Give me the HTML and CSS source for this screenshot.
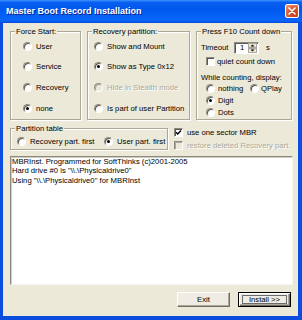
FILE: index.html
```html
<!DOCTYPE html>
<html lang="en">
<head>
  <meta charset="UTF-8" />
  <title>Master Boot Record Installation</title>
  <link rel="stylesheet" href="styles.css">
</head>
<body>
  <div class="window">
    <div class="titlebar">
      <span class="title">Master Boot Record Installation</span>
      <span class="close">
        <svg width="8" height="8" viewBox="0 0 8 8"><path d="M1 1L7 7M7 1L1 7" stroke="#fff" stroke-width="1.6" stroke-linecap="round"/></svg>
      </span>
    </div>

    <div class="client">
      <div class="top-row">
        <!-- Force Start -->
        <fieldset class="group">
          <legend>Force Start:</legend>
          <div class="opts force">
            <div class="opt"><span class="radio"></span>User</div>
            <div class="opt"><span class="radio"></span>Service</div>
            <div class="opt"><span class="radio"></span>Recovery</div>
            <div class="opt"><span class="radio on"></span>none</div>
          </div>
        </fieldset>

        <!-- Recovery partition -->
        <fieldset class="group">
          <legend>Recovery partition:</legend>
          <div class="opts recovery">
            <div class="opt"><span class="radio"></span>Show and Mount</div>
            <div class="opt"><span class="radio on"></span>Show as Type 0x12</div>
            <div class="opt disabled"><span class="radio"></span>Hide in Stealth mode</div>
            <div class="opt"><span class="radio"></span>Is part of user Partition</div>
          </div>
        </fieldset>

        <!-- Press F10 -->
        <fieldset class="group">
          <legend>Press F10 Count down</legend>
          <div class="f10">
            <div class="timeout-row">
              <span class="timeout-label">Timeout</span>
              <span class="spin">
                <span class="spin-value">1</span>
                <svg class="spin-arrows" width="9" height="10" viewBox="0 0 9 10">
                  <rect x="0.5" y="0.5" width="8" height="4" fill="#ece9d8" stroke="#aca899"/>
                  <rect x="0.5" y="5.5" width="8" height="4" fill="#ece9d8" stroke="#aca899"/>
                  <path d="M2.5 3.5L4.5 1.5L6.5 3.5Z" fill="#000"/>
                  <path d="M2.5 6.5L4.5 8.5L6.5 6.5Z" fill="#000"/>
                </svg>
              </span>
              <span class="unit">s</span>
            </div>
            <div class="opt check-row"><span class="check"></span>quiet count down</div>
            <div class="while">While counting, display:</div>
            <div class="opt radio-row">
              <span class="pair"><span class="radio"></span>nothing</span>
              <span class="pair"><span class="radio"></span>QPlay</span>
            </div>
            <div class="opt radio-row"><span class="radio on"></span>Digit</div>
            <div class="opt radio-row"><span class="radio"></span>Dots</div>
          </div>
        </fieldset>
      </div>

      <div class="mid-row">
        <fieldset class="group ptable">
          <legend>Partition table</legend>
          <div class="ptable-opts">
            <span class="opt first"><span class="radio"></span>Recovery part. first</span>
            <span class="opt"><span class="radio on"></span>User part. first</span>
          </div>
        </fieldset>
        <div class="checks">
          <div class="opt"><span class="check on">
            <svg width="7" height="7" viewBox="0 0 7 7"><path d="M1 3.2L2.7 5L6 1.5" fill="none" stroke="#000" stroke-width="1.4"/></svg>
          </span>use one sector MBR</div>
          <div class="opt disabled"><span class="check off"></span>restore deleted Recovery part.</div>
        </div>
      </div>

      <div class="log">MBRInst. Programmed for SoftThinks (c)2001-2005
Hard drive #0 is "\\.\Physicaldrive0"
Using "\\.\Physicaldrive0" for MBRInst</div>

      <div class="buttons">
        <button class="btn">Exit</button>
        <button class="btn default"><span class="focus">Install &gt;&gt;</span></button>
      </div>
    </div>
  </div>
</body>
</html>
```

FILE: styles.css
```css
html, body {
  margin: 0;
  padding: 0;
}
body {
  width: 302px;
  height: 320px;
  overflow: hidden;
  font-family: "Liberation Sans", Arial, sans-serif;
  font-size: 7.7px;
  line-height: 9px;
  color: #000;
}
.window {
  width: 302px;
  height: 320px;
  display: flex;
  flex-direction: column;
  background: #0a4ddf;
}

/* Title bar */
.titlebar {
  flex: none;
  height: 22px;
  padding: 0 0 1px 6px;
  display: flex;
  align-items: center;
  background: linear-gradient(to bottom, #3d95ff 0%, #0a5ef0 10%, #0058ee 40%, #0866fb 85%, #0b62f4 92%, #0445d8 100%);
}
.title {
  font-weight: 700;
  font-size: 9px;
  color: #fff;
  text-shadow: 1px 1px 0 #0a1f8f;
}
.close {
  margin-left: auto;
  margin-right: 3px;
  width: 14px;
  height: 14px;
  box-sizing: border-box;
  border: 1px solid #fff;
  border-radius: 2px;
  background: radial-gradient(circle at 70% 75%, #c63a1a 0%, #d85a32 50%, #ea8a64 85%, #f5b49a 100%);
  display: flex;
  align-items: center;
  justify-content: center;
}

/* Client area */
.client {
  flex: 1;
  margin: 0 4px 4px 3px;
  padding: 3.5px 5px 0 7px;
  background: #ece9d8;
  display: flex;
  flex-direction: column;
}

/* Group boxes */
.top-row {
  display: grid;
  grid-template-columns: 71px 103px 96px;
  column-gap: 6px;
  height: 93px;
}
.group {
  margin: 0;
  padding: 0;
  min-width: 0;
  border: 1px solid #aca899;
  box-shadow: 1px 1px 0 #fff, inset 1px 1px 0 #fff;
}
.group legend {
  margin-left: 4px;
  padding: 0 1px;
  line-height: 9px;
  background: #ece9d8;
}

.opts {
  display: flex;
  flex-direction: column;
  gap: 11.7px;
  padding-top: 6px;
}
.opts.force {
  padding-left: 12px;
}
.opts.recovery {
  padding-left: 6px;
}
.opt {
  display: flex;
  align-items: center;
  gap: 4px;
  height: 9px;
  white-space: nowrap;
}
.opt.disabled {
  color: #aca899;
  text-shadow: 1px 1px 0 #fff;
}

/* Radio and check boxes */
.radio {
  flex: none;
  position: relative;
  width: 9px;
  height: 9px;
  box-sizing: border-box;
  border-radius: 50%;
  background: #fff;
  border: 1px solid;
  border-color: #8d8b80 #fff #fff #8d8b80;
  box-shadow: inset 1px 1px 0 #5a5850;
}
.radio.on::after {
  content: '';
  position: absolute;
  left: 2px;
  top: 2px;
  width: 3px;
  height: 3px;
  border-radius: 50%;
  background: #000;
}
.disabled .radio {
  background: #ece9d8;
  box-shadow: inset 1px 1px 0 #aca899;
}
.check {
  flex: none;
  width: 9px;
  height: 9px;
  box-sizing: border-box;
  background: #fff;
  border: 1px solid;
  border-color: #8d8b80 #fff #fff #8d8b80;
  box-shadow: inset 1px 1px 0 #5a5850;
  display: flex;
  align-items: center;
  justify-content: center;
}
.check.off {
  background: #ece9d8;
  box-shadow: inset 1px 1px 0 #aca899;
}

/* Press F10 group */
.f10 {
  padding: 6px 0 0 4px;
}
.timeout-row {
  display: flex;
  align-items: center;
  height: 12px;
}
.timeout-label {
  width: 33px;
}
.spin {
  width: 25px;
  height: 12px;
  box-sizing: border-box;
  background: #fff;
  border: 1px solid;
  border-color: #8d8b80 #fff #fff #8d8b80;
  box-shadow: inset 1px 1px 0 #5a5850;
  display: flex;
  align-items: center;
  padding-left: 5px;
}
.spin-value {
  flex: 1;
}
.spin-arrows {
  margin-right: 1px;
}
.unit {
  margin-left: 7px;
}
.check-row {
  margin: 3.3px 0 0 5px;
  gap: 2px;
}
.while {
  margin-top: 7px;
  height: 9px;
}
.radio-row {
  margin: 2.6px 0 0 5px;
  gap: 3px;
}
.pair {
  display: flex;
  align-items: center;
  gap: 3px;
  width: 48px;
}
.pair:last-child {
  gap: 2px;
}

/* Partition table row */
.mid-row {
  display: flex;
  margin-top: 4.3px;
}
.ptable {
  width: 158px;
  box-sizing: border-box;
}
.ptable-opts {
  display: flex;
  padding: 4.4px 0 3px 6px;
}
.ptable-opts .first {
  width: 87px;
}
.checks {
  margin-left: 6px;
  padding-top: 4.2px;
  display: flex;
  flex-direction: column;
  gap: 4px;
}

/* Output log */
.log {
  margin-top: 5.8px;
  height: 129px;
  box-sizing: border-box;
  padding: 0 0 0 1px;
  background: #fff;
  border: 1px solid;
  border-color: #8d8b80 #f5f4ee #f5f4ee #8d8b80;
  box-shadow: inset 1px 1px 0 #cfcbbd;
  white-space: pre;
  line-height: 9.5px;
}

/* Buttons */
.buttons {
  display: flex;
  justify-content: flex-end;
  gap: 8px;
  margin-top: 7px;
  padding-right: 2px;
}
.btn {
  width: 53px;
  height: 15px;
  padding: 0;
  box-sizing: border-box;
  font: inherit;
  color: #000;
  background: #efede3;
  border: 1px solid;
  border-color: #fff #716f64 #716f64 #fff;
  box-shadow: inset -1px -1px 0 #aca899;
  display: flex;
  align-items: center;
  justify-content: center;
}
.btn.default {
  border: 1px solid #000;
  box-shadow: inset 1px 1px 0 #fff, inset -1px -1px 0 #716f64, inset -2px -2px 0 #aca899;
}
.focus {
  width: 45px;
  height: 9px;
  box-sizing: border-box;
  border: 1px solid #6b6b6b;
  display: flex;
  align-items: center;
  justify-content: center;
}
```
